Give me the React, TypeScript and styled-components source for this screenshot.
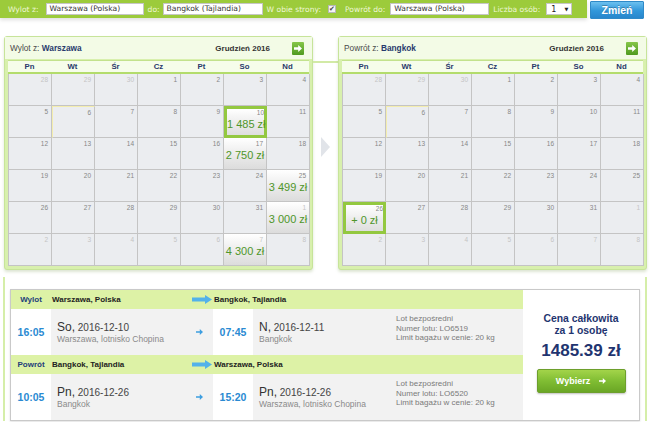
import React from 'react';
import styled, { createGlobalStyle, css } from 'styled-components';

const Global = createGlobalStyle`
  html, body { margin: 0; padding: 0; background: #fff; }
  body { font-family: "Liberation Sans", Arial, sans-serif; width: 650px; height: 422px; overflow: hidden; }
  * { box-sizing: border-box; }
`;

const Page = styled.div`
  width: 650px;
  display: flex;
  flex-direction: column;
`;

/* ---------- top search bar ---------- */
const TopRow = styled.div`
  display: flex;
  align-items: flex-start;
  height: 20px;
`;

const SearchBar = styled.div`
  width: 587px;
  height: 18px;
  background: #9ccb3b;
  display: flex;
  align-items: center;
  padding-left: 8px;
  box-shadow: 0 2px 4px rgba(0, 0, 0, 0.13);
  font-family: "DejaVu Sans", Verdana, sans-serif;
  font-size: 7.6px;
`;

const BarLabel = styled.span<{ $gap: number }>`
  color: #eef7d6;
  margin-right: ${(p) => p.$gap}px;
  white-space: nowrap;
`;

const BarInput = styled.div<{ $w: number }>`
  width: ${(p) => p.$w}px;
  height: 12px;
  background: #fff;
  border: 1px solid #c6c6c6;
  color: #333;
  padding-left: 3px;
  line-height: 10px;
  margin-right: 4px;
  white-space: nowrap;
  overflow: hidden;
`;

const CheckBox = styled.div`
  width: 8px;
  height: 8px;
  background: #f4f4f4;
  border: 1px solid #b8b8b8;
  margin-right: 9px;
  display: flex;
  align-items: center;
  justify-content: center;
  color: #444;
  font-size: 7px;
  line-height: 6px;
`;

const SelectBox = styled.div`
  width: 26px;
  height: 12px;
  background: #fff;
  border: 1px solid #c6c6c6;
  display: flex;
  align-items: center;
  justify-content: space-between;
  padding: 0 3px 0 4px;
  color: #222;
  font-size: 8px;
`;

const SelectArrow = styled.span`
  font-size: 5px;
  color: #222;
`;

const ChangeButton = styled.button`
  margin: 1px 0 0 3px;
  width: 54px;
  height: 18px;
  border: 1px solid #2f8ac8;
  border-radius: 1px;
  background: linear-gradient(#6cc0ef, #3197da 55%, #2886cc);
  color: #fff;
  font-family: "Liberation Sans", Arial, sans-serif;
  font-weight: bold;
  font-size: 10.5px;
  padding: 0;
  text-shadow: 0 -1px 0 rgba(0, 0, 0, 0.25);
`;

/* ---------- calendars ---------- */
const CalendarsRow = styled.div`
  display: flex;
  margin-top: 16px;
  padding-left: 4px;
`;

const Panel = styled.div`
  width: 309px;
  border: 1px solid #c7e49a;
  border-radius: 3px;
  background: #d8f0ad;
  box-shadow: 0 2px 3px rgba(120, 150, 80, 0.25);
`;

const PanelHeader = styled.div`
  height: 22px;
  background: #f3fbe6;
  display: flex;
  align-items: center;
  padding: 0 8px 0 5px;
  font-size: 8.3px;
`;

const PanelTitle = styled.div`
  flex: 1;
  color: #4a4a4a;
  b { color: #283a6c; }
`;

const MonthLabel = styled.div`
  font-weight: bold;
  color: #333;
  font-size: 8px;
  margin-right: 22px;
`;

const NavButton = styled.div`
  width: 12px;
  height: 13px;
  border-radius: 1px;
  background: linear-gradient(#86c649, #4f9a1f);
  display: flex;
  align-items: center;
  justify-content: center;
`;

const PanelBody = styled.div`
  padding: 0 3px 3px 3px;
`;

const WeekHeader = styled.div`
  display: grid;
  grid-template-columns: repeat(7, 43px);
  height: 14px;
  background: #f6fdea;
  border-top: 1px solid #c3e28d;
  border-bottom: 2px solid #b3dc6c;
  margin-top: 1px;
`;

const WeekDay = styled.div`
  text-align: center;
  font-weight: bold;
  font-size: 7.8px;
  line-height: 11px;
  color: #2a3a6a;
`;

const DaysGrid = styled.div`
  display: grid;
  grid-template-columns: repeat(7, 43px);
  grid-auto-rows: 32px;
  border-left: 1px solid #c4c4c4;
`;

const DayCell = styled.div<{ $priced: boolean; $selected: boolean; $today: boolean }>`
  border-right: 1px solid #c4c4c4;
  border-bottom: 1px solid #c4c4c4;
  background: #ebedf0;
  display: flex;
  flex-direction: column;
  overflow: visible;
  ${(p) =>
    p.$today &&
    css`
      border-top: 1px solid #f3edae;
      border-left: 1px solid #f3edae;
    `}
  ${(p) =>
    p.$priced &&
    css`
      background: linear-gradient(#ffffff, #e9e9e9 60%, #dcdcdc);
    `}
  ${(p) =>
    p.$selected &&
    css`
      border: 3px solid #93c840;
      background: linear-gradient(#ffffff, #eaeaea 60%, #dedede);
    `}
`;

const DayNum = styled.div<{ $other: boolean; $selected: boolean }>`
  text-align: right;
  font-size: 6.5px;
  line-height: 8px;
  padding: ${(p) => (p.$selected ? '0 0 0 0' : '2px 3px 0 0')};
  color: ${(p) => (p.$other ? '#c4c4c4' : '#878787')};
`;

const DayPrice = styled.div`
  text-align: center;
  white-space: nowrap;
  font-size: 11px;
  line-height: 13px;
  margin-top: 1px;
  color: #4f962a;
`;

const Connector = styled.div`
  width: 25px;
  display: flex;
  flex-direction: column;
  align-items: center;
`;

const ConnectorLine = styled.div`
  width: 100%;
  height: 2px;
  background: #d2eaa6;
  margin-top: 25px;
`;

const Chevron = styled.div`
  margin-top: 74px;
  width: 0;
  height: 0;
  border-left: 9px solid #e1e4e9;
  border-top: 10px solid transparent;
  border-bottom: 10px solid transparent;
`;

/* ---------- bottom result ---------- */
const ResultFrame = styled.div`
  margin: 7px 0 0 3px;
  width: 644px;
  border-left: 2px solid #d5eea9;
  border-right: 2px solid #d5eea9;
  padding: 12px 5px 0 5px;
`;

const ResultCard = styled.div`
  display: flex;
  border: 1px solid #c9c9c9;
  background: #fff;
  box-shadow: 0 1px 2px rgba(0, 0, 0, 0.12);
`;

const FlightTable = styled.div`
  width: 512px;
  display: grid;
  grid-template-columns: 40px 134px 28px 40px 137px 133px;
  grid-template-rows: 19px 46px 19px 46px;
`;

const HeadCell = styled.div<{ $span?: number }>`
  background: #ddf2a6;
  display: flex;
  align-items: center;
  font-weight: bold;
  font-size: 8px;
  color: #222;
  padding-left: 1px;
  ${(p) => p.$span && css`grid-column: span ${p.$span};`}
`;

const HeadLabel = styled(HeadCell)`
  justify-content: center;
  padding-left: 0;
  color: #23407a;
`;

const HeadArrow = styled(HeadCell)`
  justify-content: flex-end;
  padding-right: 1px;
`;

const TimeCell = styled.div`
  display: flex;
  align-items: center;
  justify-content: center;
  font-weight: bold;
  font-size: 10.5px;
  color: #2a8ad2;
  background: #fff;
`;

const GrayCell = styled.div`
  background: #f2f2f2;
`;

const DateCell = styled(GrayCell)`
  display: flex;
  flex-direction: column;
  justify-content: center;
  padding-left: 6px;
`;

const DateLine = styled.div`
  font-size: 10px;
  line-height: 12px;
  color: #444;
  span { font-size: 12px; color: #333; }
`;

const PlaceLine = styled.div`
  font-size: 8.5px;
  line-height: 10px;
  color: #8a8a8a;
`;

const ArrowCell = styled(GrayCell)`
  display: flex;
  align-items: center;
  justify-content: center;
`;

const InfoCell = styled(GrayCell)`
  padding: 5px 0 0 6px;
  font-size: 8px;
  line-height: 9.6px;
  color: #7a7a7a;
`;

const PriceBox = styled.div`
  flex: 1;
  display: flex;
  flex-direction: column;
  align-items: center;
  padding-top: 23px;
  color: #1f3570;
`;

const PriceCaption = styled.div`
  font-weight: bold;
  font-size: 10.4px;
  line-height: 12px;
  text-align: center;
`;

const TotalPrice = styled.div`
  font-weight: bold;
  font-size: 17px;
  line-height: 20px;
  margin-top: 4px;
`;

const ChooseButton = styled.button`
  margin-top: 8px;
  width: 89px;
  height: 24px;
  border: 1px solid #6d9f2c;
  border-radius: 2px;
  background: linear-gradient(#a3d44a, #80bd33 50%, #6aa625);
  box-shadow: 0 1px 2px rgba(0, 0, 0, 0.25);
  color: #fff;
  font-family: "Liberation Sans", Arial, sans-serif;
  font-weight: bold;
  font-size: 9px;
  display: flex;
  align-items: center;
  justify-content: center;
  gap: 9px;
  padding: 0;
`;

/* ---------- icons ---------- */
const NavArrowIcon = () => (
  <svg width="8" height="7" viewBox="0 0 8 7">
    <path d="M0 2.3h4.2V0L8 3.5 4.2 7V4.7H0z" fill="#fff" />
  </svg>
);

const BigArrow = () => (
  <svg width="20" height="9" viewBox="0 0 20 9">
    <path d="M0 2.5h13V0l7 4.5-7 4.5V6.5H0z" fill="#53b2ea" />
  </svg>
);

const SmallArrow = ({ color = '#3d9ee0' }: { color?: string }) => (
  <svg width="7" height="6" viewBox="0 0 7 6">
    <path d="M0 2.2h3.8V0L7 3 3.8 6V3.8H0z" fill={color} />
  </svg>
);

/* ---------- data ---------- */
type Day = { n: number; other: boolean; price?: string; selected?: boolean; today?: boolean };

const buildMonth = (prices: Record<number, string>, selected: number): Day[] => {
  const days: Day[] = [];
  for (let i = 0; i < 42; i++) {
    let n: number;
    let other = false;
    if (i < 3) {
      n = 28 + i;
      other = true;
    } else if (i < 34) {
      n = i - 2;
    } else {
      n = i - 33;
      other = true;
    }
    days.push({ n, other, price: prices[i], selected: i === selected, today: i === 8 });
  }
  return days;
};

const outbound = buildMonth(
  { 12: '1 485 zł', 19: '2 750 zł', 27: '3 499 zł', 34: '3 000 zł', 40: '4 300 zł' },
  12
);
const inbound = buildMonth({ 28: '+ 0 zł' }, 28);

const weekDays = ['Pn', 'Wt', 'Śr', 'Cz', 'Pt', 'So', 'Nd'];

const Calendar = ({ label, city, days }: { label: string; city: string; days: Day[] }) => (
  <Panel>
    <PanelHeader>
      <PanelTitle>
        {label} <b>{city}</b>
      </PanelTitle>
      <MonthLabel>Grudzień 2016</MonthLabel>
      <NavButton>
        <NavArrowIcon />
      </NavButton>
    </PanelHeader>
    <PanelBody>
      <WeekHeader>
        {weekDays.map((d) => (
          <WeekDay key={d}>{d}</WeekDay>
        ))}
      </WeekHeader>
      <DaysGrid>
        {days.map((d, i) => (
          <DayCell key={i} $priced={!!d.price} $selected={!!d.selected} $today={!!d.today}>
            <DayNum $other={d.other} $selected={!!d.selected}>
              {d.n}
            </DayNum>
            {d.price && <DayPrice>{d.price}</DayPrice>}
          </DayCell>
        ))}
      </DaysGrid>
    </PanelBody>
  </Panel>
);

type Leg = {
  label: string;
  from: string;
  to: string;
  depTime: string;
  depDay: string;
  depDate: string;
  depPlace: string;
  arrTime: string;
  arrDay: string;
  arrDate: string;
  arrPlace: string;
  flight: string;
};

const legs: Leg[] = [
  {
    label: 'Wylot',
    from: 'Warszawa, Polska',
    to: 'Bangkok, Tajlandia',
    depTime: '16:05',
    depDay: 'So',
    depDate: '2016-12-10',
    depPlace: 'Warszawa, lotnisko Chopina',
    arrTime: '07:45',
    arrDay: 'N',
    arrDate: '2016-12-11',
    arrPlace: 'Bangkok',
    flight: 'LO6519',
  },
  {
    label: 'Powrót',
    from: 'Bangkok, Tajlandia',
    to: 'Warszawa, Polska',
    depTime: '10:05',
    depDay: 'Pn',
    depDate: '2016-12-26',
    depPlace: 'Bangkok',
    arrTime: '15:20',
    arrDay: 'Pn',
    arrDate: '2016-12-26',
    arrPlace: 'Warszawa, lotnisko Chopina',
    flight: 'LO6520',
  },
];

export default function App() {
  return (
    <Page>
      <Global />
      <TopRow>
        <SearchBar>
          <BarLabel $gap={7}>Wylot z:</BarLabel>
          <BarInput $w={98}>Warszawa (Polska)</BarInput>
          <BarLabel $gap={3}>do:</BarLabel>
          <BarInput $w={100}>Bangkok (Tajlandia)</BarInput>
          <BarLabel $gap={7}>W obie strony:</BarLabel>
          <CheckBox>✔</CheckBox>
          <BarLabel $gap={5}>Powrót do:</BarLabel>
          <BarInput $w={99}>Warszawa (Polska)</BarInput>
          <BarLabel $gap={6}>Liczba osób:</BarLabel>
          <SelectBox>
            1<SelectArrow>▼</SelectArrow>
          </SelectBox>
        </SearchBar>
        <ChangeButton>Zmień</ChangeButton>
      </TopRow>

      <CalendarsRow>
        <Calendar label="Wylot z:" city="Warszawa" days={outbound} />
        <Connector>
          <ConnectorLine />
          <Chevron />
        </Connector>
        <Calendar label="Powrót z:" city="Bangkok" days={inbound} />
      </CalendarsRow>

      <ResultFrame>
        <ResultCard>
          <FlightTable>
            {legs.map((l) => (
              <React.Fragment key={l.label}>
                <HeadLabel>{l.label}</HeadLabel>
                <HeadCell>{l.from}</HeadCell>
                <HeadArrow>
                  <BigArrow />
                </HeadArrow>
                <HeadCell $span={3}>{l.to}</HeadCell>

                <TimeCell>{l.depTime}</TimeCell>
                <DateCell>
                  <DateLine>
                    <span>{l.depDay},</span> {l.depDate}
                  </DateLine>
                  <PlaceLine>{l.depPlace}</PlaceLine>
                </DateCell>
                <ArrowCell>
                  <SmallArrow />
                </ArrowCell>
                <TimeCell>{l.arrTime}</TimeCell>
                <DateCell>
                  <DateLine>
                    <span>{l.arrDay},</span> {l.arrDate}
                  </DateLine>
                  <PlaceLine>{l.arrPlace}</PlaceLine>
                </DateCell>
                <InfoCell>
                  Lot bezpośredni
                  <br />
                  Numer lotu: {l.flight}
                  <br />
                  Limit bagażu w cenie: 20 kg
                </InfoCell>
              </React.Fragment>
            ))}
          </FlightTable>
          <PriceBox>
            <PriceCaption>
              Cena całkowita
              <br />
              za 1 osobę
            </PriceCaption>
            <TotalPrice>1485.39 zł</TotalPrice>
            <ChooseButton>
              Wybierz <SmallArrow color="#fff" />
            </ChooseButton>
          </PriceBox>
        </ResultCard>
      </ResultFrame>
    </Page>
  );
}
